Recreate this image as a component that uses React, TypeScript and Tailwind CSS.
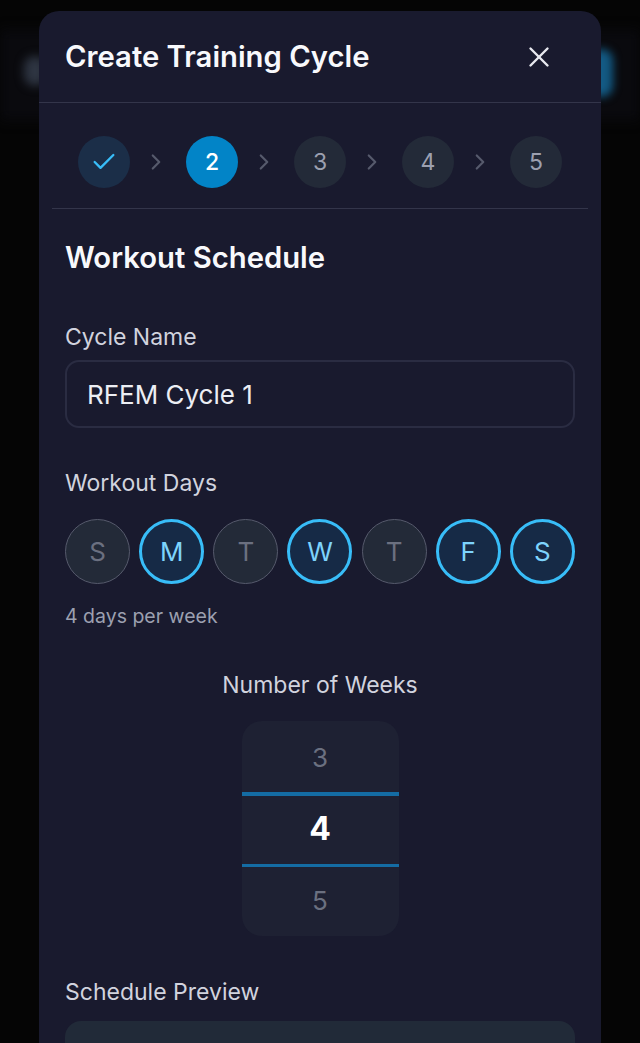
import { Check, ChevronRight, X } from 'lucide-react';

const days = [
  { label: 'S', on: false },
  { label: 'M', on: true },
  { label: 'T', on: false },
  { label: 'W', on: true },
  { label: 'T', on: false },
  { label: 'F', on: true },
  { label: 'S', on: true },
];

function Step({ n }: { n: number }) {
  return (
    <div className="flex h-[52px] w-[52px] items-center justify-center rounded-full bg-[#232a38] text-[23px] text-[#9ca0b0]">
      {n}
    </div>
  );
}

function Arrow() {
  return (
    <div className="flex h-[52px] items-center">
      <ChevronRight className="ml-[13px] mr-[17px] h-[26px] w-[26px] text-[#565a6c]" strokeWidth={2} />
    </div>
  );
}

export default function App() {
  return (
    <div className="relative h-[1043px] w-[640px] overflow-hidden bg-[#050505] font-['Inter',sans-serif]">
      {/* blurred page behind the sheet */}
      <div className="absolute left-0 top-[30px] h-[90px] w-[640px] bg-[#0a0a0e] blur-[6px]" />
      <div className="absolute left-[24px] top-[56px] h-[30px] w-[22px] rounded-xl bg-[#2e3542] blur-[5px]" />
      <div className="absolute left-[590px] top-[49px] h-[48px] w-[23px] rounded-xl bg-[#135a84] blur-[4px]" />

      <div className="absolute left-[39px] top-[11px] flex h-[1100px] w-[562px] flex-col rounded-[20px] bg-[#191a2e]">
        <div className="flex h-[92px] shrink-0 items-center justify-between border-b border-[#33354a] pl-[26px] pr-[45px]">
          <h1 className="text-[29.25px] font-semibold leading-none text-[#f8f9fc]">Create Training Cycle</h1>
          <X className="h-[34px] w-[34px] text-[#e8e9ef]" strokeWidth={1.7} />
        </div>

        <div className="mx-[13px] flex h-[106px] shrink-0 items-start justify-center border-b border-[#33354a] pt-[33px]">
          <div className="flex h-[52px] w-[52px] items-center justify-center rounded-full bg-[#1b2e48]">
            <Check className="h-[28px] w-[28px] text-[#38bdf8]" strokeWidth={2} />
          </div>
          <Arrow />
          <div className="flex h-[52px] w-[52px] items-center justify-center rounded-full bg-[#0284c7] text-[23px] font-medium text-white">
            2
          </div>
          <Arrow />
          <Step n={3} />
          <Arrow />
          <Step n={4} />
          <Arrow />
          <Step n={5} />
        </div>

        <div className="flex flex-col px-[26px]">
          <h2 className="mt-[32px] text-[29.25px] font-semibold leading-[34px] text-[#f8f9fc]">Workout Schedule</h2>

          <label className="mt-[47px] text-[23px] leading-[30px] text-[#d1d3de]">Cycle Name</label>
          <div className="mt-[8px] flex h-[68px] items-center rounded-[14px] border-2 border-[#2a2c42] px-[20px] text-[26px] text-[#eceef4]">
            RFEM Cycle 1
          </div>

          <label className="mt-[40px] text-[23px] leading-[30px] text-[#d1d3de]">Workout Days</label>
          <div className="mt-[21px] flex justify-between">
            {days.map((d, i) =>
              d.on ? (
                <div
                  key={i}
                  className="flex h-[65px] w-[65px] items-center justify-center rounded-full border-[3px] border-[#38bdf8] bg-[#162a46] text-[26px] font-normal text-[#7dd3fc]"
                >
                  {d.label}
                </div>
              ) : (
                <div
                  key={i}
                  className="flex h-[65px] w-[65px] items-center justify-center rounded-full border border-[#565a6c] bg-[#232a38] text-[26px] font-normal text-[#6b7080]"
                >
                  {d.label}
                </div>
              ),
            )}
          </div>
          <p className="mt-[19px] text-[19.5px] leading-[26px] text-[#9ca0b0]">4 days per week</p>

          <p className="mt-[41px] text-center text-[23px] leading-[30px] text-[#d1d3de]">Number of Weeks</p>
          <div className="mx-auto mt-[21px] flex h-[215px] w-[157px] flex-col rounded-[20px] bg-[#1e2133]">
            <div className="flex h-[71px] items-center justify-center pt-[1px] text-[26px] text-[#6b7080]">3</div>
            <div className="flex h-[75px] items-center justify-center border-b-[3px] border-t-[4px] border-[#146ca4] pb-[2px] text-[32px] font-bold text-white">
              4
            </div>
            <div className="flex h-[69px] items-center justify-center pb-[2px] text-[26px] text-[#6b7080]">5</div>
          </div>

          <label className="mt-[41px] text-[23px] leading-[30px] text-[#d1d3de]">Schedule Preview</label>
          <div className="mt-[14px] h-[120px] rounded-[16px] bg-[#212a38]" />
        </div>
      </div>
    </div>
  );
}
